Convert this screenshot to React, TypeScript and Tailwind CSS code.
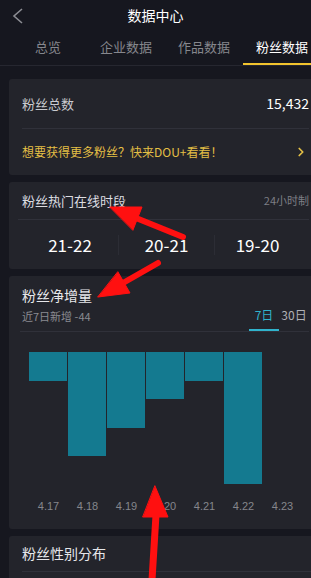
import { ChevronRight } from "lucide-react";

const tabs = ["总览", "企业数据", "作品数据", "粉丝数据"];
const hours = ["21-22", "20-21", "19-20"];
// bar depth in px below the baseline, one per day
const bars = [
  { day: "4.17", h: 29 },
  { day: "4.18", h: 104 },
  { day: "4.19", h: 76 },
  { day: "4.20", h: 47 },
  { day: "4.21", h: 29 },
  { day: "4.22", h: 132 },
  { day: "4.23", h: 0 },
];

function Arrows() {
  return (
    <svg className="pointer-events-none absolute inset-0" width="311" height="578" viewBox="0 0 311 578">
      <g fill="#ff1010" stroke="#ff1010" strokeLinecap="round">
        <line x1="136" y1="218" x2="183" y2="237" strokeWidth="6" />
        <polygon points="110,207 142,207 133,230" strokeWidth="1" />
        <line x1="123" y1="283" x2="158" y2="263" strokeWidth="6" />
        <polygon points="98,297 130,293 118,272" strokeWidth="1" />
        <line x1="156" y1="515" x2="152" y2="580" strokeWidth="7" />
        <polygon points="155,486 168,517 143,517" strokeWidth="1" />
      </g>
    </svg>
  );
}

export default function App() {
  return (
    <div
      className="relative h-[578px] w-[311px] overflow-hidden bg-[#16171f] text-white"
      style={{ fontFamily: '"Noto Sans CJK SC", "Noto Sans", sans-serif' }}
    >
      <header className="border-b border-[#262730]">
        <div className="relative flex h-[30px] items-center justify-center">
          <svg className="absolute left-[12px] top-[8px]" width="11" height="16" viewBox="0 0 11 16">
            <polyline points="10,1 2,8 10,15" fill="none" stroke="#8c8d93" strokeWidth="1.6" />
          </svg>
          <span className="text-[14px] text-white">数据中心</span>
        </div>
        <div className="flex pl-[9px]">
          {tabs.map((t, i) => (
            <div
              key={t}
              className={`flex h-[35px] w-[78px] shrink-0 items-center justify-center border-b-2 text-[13px] ${
                i === 3 ? "border-[#f2c42e] text-white" : "border-transparent text-[#86878d]"
              }`}
            >
              {t}
            </div>
          ))}
        </div>
      </header>

      <main className="flex flex-col gap-[7px] pl-[9px] pt-[13px]">
        <section className="w-[311px] shrink-0 rounded-[3px] bg-[#23242b] pl-[13px] pr-[11px]">
          <div className="flex h-[50px] items-center justify-between border-b border-[#30313a] text-[13px]">
            <span className="text-[#c9cacf]">粉丝总数</span>
            <span className="text-[14px] text-white">15,432</span>
          </div>
          <div className="flex h-[46px] items-center justify-between text-[12px] text-[#e3bf45]">
            <span>想要获得更多粉丝？快来DOU+看看！</span>
            <ChevronRight size={14} strokeWidth={3} className="mr-[1px]" />
          </div>
        </section>

        <section className="w-[311px] shrink-0 rounded-[3px] bg-[#23242b]">
          <div className="ml-[9px] mr-[11px] flex h-[38px] items-center justify-between border-b border-[#30313a] pl-[4px]">
            <span className="text-[13px] text-[#dcdde1]">粉丝热门在线时段</span>
            <span className="text-[11px] text-[#7d7e85]">24小时制</span>
          </div>
          <div className="flex h-[49px] items-center pl-[13px]">
            {hours.map((h, i) => (
              <div
                key={h}
                className={`flex h-[20px] items-center justify-center text-[17px] text-white ${
                  i === 2 ? "w-[86px]" : "w-[96px]"
                } ${i > 0 ? "border-l border-[#2c2d35]" : ""}`}
              >
                {h}
              </div>
            ))}
          </div>
        </section>

        <section className="w-[311px] shrink-0 rounded-[3px] bg-[#23242b]">
          <div className="pl-[13px] pt-[9px] text-[14px] text-[#e6e7ea]">粉丝净增量</div>
          <div className="ml-[11px] mr-[11px] flex items-end justify-between border-b border-[#30313a] pl-[2px]">
            <span className="pb-[7px] text-[11px] text-[#8a8b91]">近7日新增 -44</span>
            <div className="flex text-[12px]">
              <span className="w-[30px] border-b-2 border-[#30b3cc] pb-[5px] text-center text-[#30b3cc]">7日</span>
              <span className="w-[30px] pb-[5px] text-center text-[#b0b1b6]">30日</span>
            </div>
          </div>
          <div className="flex pl-[20px] pt-[20px]">
            {bars.map((b) => (
              <div key={b.day} className="flex w-[39px] flex-col">
                <div className="h-[139px] pr-[1px]">
                  <div className="w-[38px] bg-[#147a90]" style={{ height: b.h }} />
                </div>
                <span className="pt-[7px] text-center text-[11px] text-[#85868c]" style={{ fontFamily: '"Liberation Sans", sans-serif' }}>
                  {b.day}
                </span>
              </div>
            ))}
          </div>
          <div className="h-[14px]" />
        </section>

        <section className="w-[311px] shrink-0 rounded-[3px] bg-[#23242b]">
          <div className="ml-[13px] flex h-[36px] items-center border-b border-[#30313a] text-[14px] text-[#e6e7ea]">
            粉丝性别分布
          </div>
          <div className="h-[40px]" />
        </section>
      </main>

      <Arrows />
    </div>
  );
}
